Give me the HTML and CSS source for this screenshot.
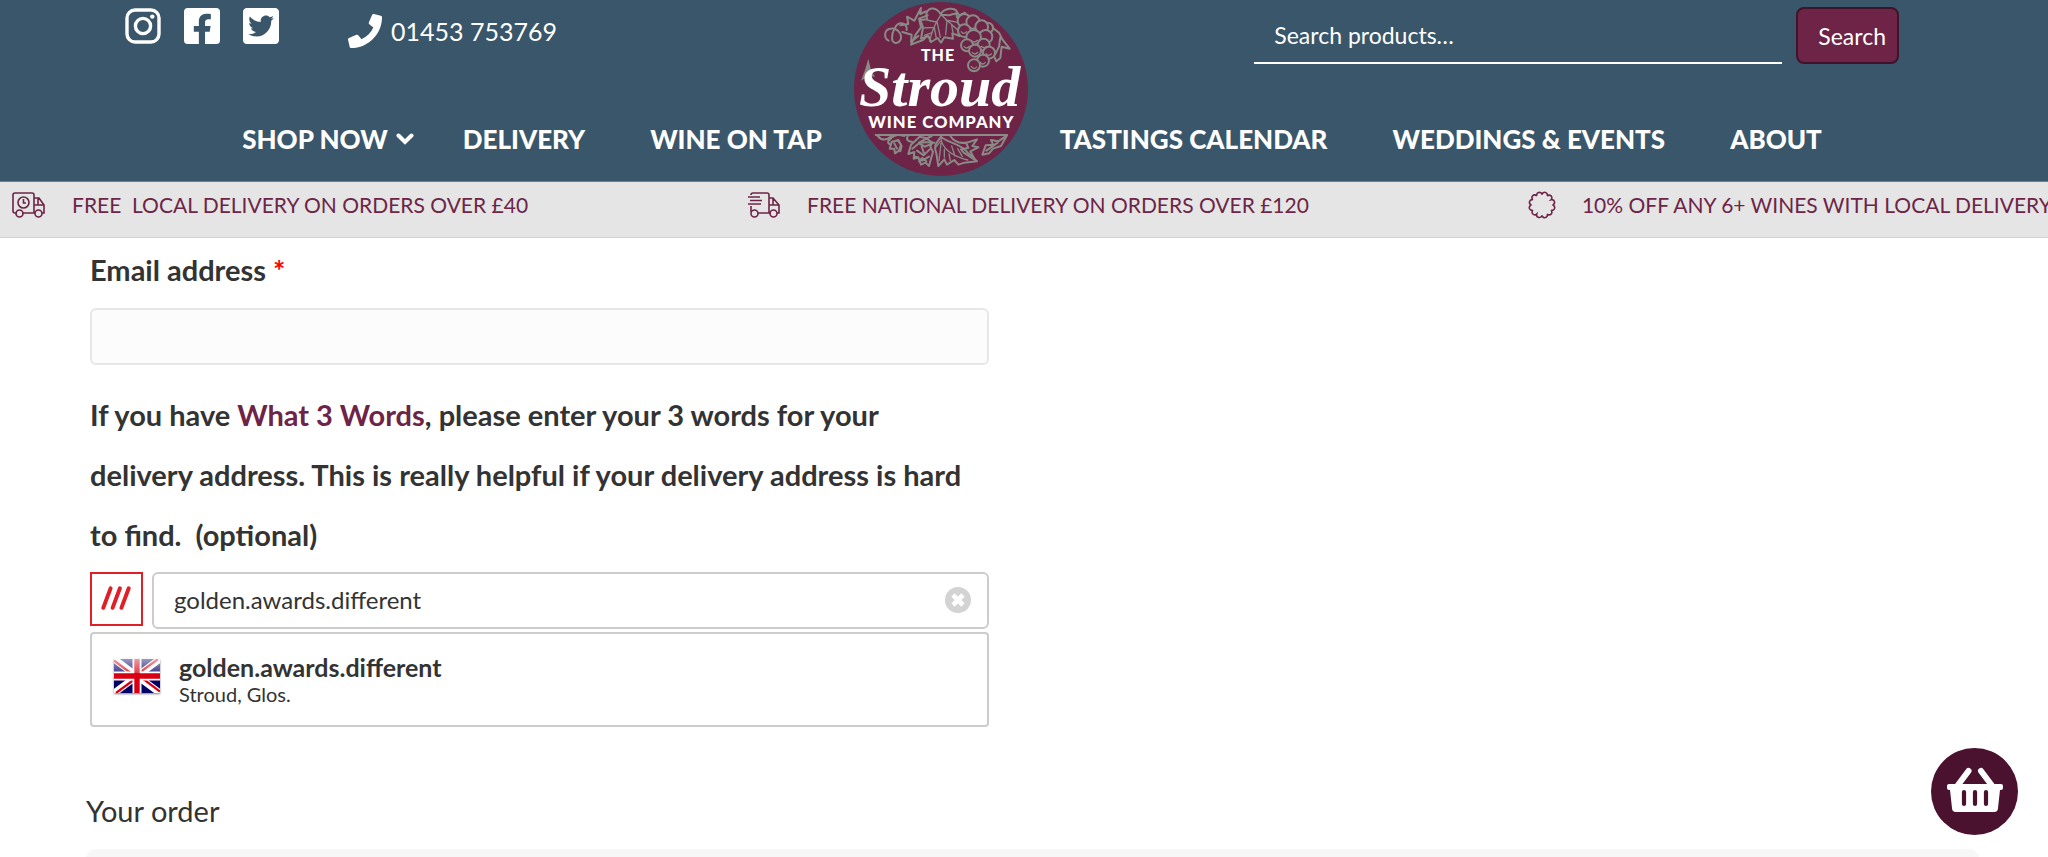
FILE: index.html
```html
<!DOCTYPE html>
<html lang="en">
<head>
  <meta charset="UTF-8">
  <meta name="viewport" content="width=device-width, initial-scale=1.0">
  <title>Checkout - The Stroud Wine Company</title>
  <link rel="stylesheet" href="styles.css">
</head>
<body>
  <header class="site-header">
    <div class="contact">
      <div class="social">
        <a href="#" aria-label="Instagram">
          <svg viewBox="0 0 36 36">
            <rect x="2" y="2" width="32" height="32" rx="8" fill="none" stroke="#fff" stroke-width="3.4"/>
            <circle cx="18" cy="18" r="7.6" fill="none" stroke="#fff" stroke-width="3.4"/>
            <circle cx="27.3" cy="8.6" r="2.2" fill="#fff"/>
          </svg>
        </a>
        <a href="#" aria-label="Facebook">
          <svg viewBox="0 0 448 448">
            <path fill="#fff" d="M400 0H48A48 48 0 0 0 0 48v352a48 48 0 0 0 48 48h137V296h-63v-72h63v-55c0-62 37-96 93-96 27 0 56 5 56 5v61h-31c-31 0-41 19-41 39v46h69l-11 72h-58v152h138a48 48 0 0 0 48-48V48a48 48 0 0 0-48-48z"/>
          </svg>
        </a>
        <a href="#" aria-label="Twitter">
          <svg viewBox="0 0 448 448">
            <path fill="#fff" d="M400 0H48C21.500 0 0 21.500 0 48v352c0 26.500 21.500 48 48 48h352c26.500 0 48-21.500 48-48V48c0-26.500-21.500-48-48-48zm-48.900 158.800c.2 2.800.2 5.700.2 8.500 0 86.700-66 186.600-186.600 186.600-37.200 0-71.700-10.800-100.700-29.400 5.300.6 10.400.8 15.800.8 30.700 0 58.900-10.400 81.400-28-28.800-.6-53-19.500-61.300-45.500 10.100 1.500 19.200 1.500 29.600-1.200-30-6.100-52.500-32.500-52.500-64.400v-.8c8.700 4.900 18.900 7.900 29.600 8.300a65.400 65.400 0 0 1-29.200-54.600c0-12.200 3.200-23.400 8.900-33.100 32.300 39.800 80.800 65.800 135.200 68.600-9.300-44.500 24-80.600 64-80.600 18.900 0 35.900 7.900 47.900 20.700 14.800-2.800 29-8.300 41.600-15.800-4.900 15.200-15.200 28-28.800 36.100 13.200-1.400 26-5.100 37.800-10.200-8.900 13.100-20.100 24.700-32.900 34z"/>
          </svg>
        </a>
      </div>
      <a class="phone" href="tel:01453753769">
        <svg viewBox="0 0 512 512">
          <path fill="#fff" d="M493.400 24.600l-104-24c-11.300-2.600-22.900 3.300-27.500 13.900l-48 112c-4.200 9.800-1.400 21.300 6.900 28l60.600 49.600c-36 76.700-98.900 140.500-177.200 177.200l-49.600-60.600c-6.800-8.300-18.200-11.100-28-6.900l-112 48C3.900 366.500-2 378.100.6 389.400l24 104C27.100 504.200 36.700 512 48 512c256.100 0 464-207.500 464-464 0-11.200-7.700-20.900-18.600-23.400z"/>
        </svg>
        01453 753769
      </a>
    </div>

    <form class="search" role="search">
      <label class="sr-only" for="searchInput">Search for</label>
      <input type="search" id="searchInput" placeholder="Search products…">
      <button type="submit">Search</button>
    </form>

    <a class="logo" href="#" aria-label="The Stroud Wine Company">
      <svg viewBox="101 6 522 522">
        <circle cx="362" cy="267" r="261" fill="#6d2446"/>
        <g fill="none" stroke="#8a8a86" stroke-width="6" stroke-linejoin="round" stroke-linecap="round">
          <!-- tendril -->
          <path d="M205 122c-16-8-14-34 6-36 22-2 38 20 28 36-8 12-24 8-24-8 0-22 14-44 26-44 14 0 20 10 18 20"/>
          <!-- small leaf, left -->
          <path d="M246 96l28 8-2 22 22-18M240 76l24-4-4-22 22 12 20-38-2 18 16-8M272 134l14-30 16-22-6-26 26-10M272 134l36-14 12-12"/>
          <!-- main vine leaf -->
          <path d="M362 44c-14-24-36-24-44-4l2 18-20 2 8 22-6 34 22-8 8 18 20-12 10 14 10-16 26 4-2-16 22 8-4-16 22-2-12-20 8-12-22-6-2-12-22 6z"/>
          <path d="M362 44c-16 24-28 48-34 80M348 66l-28-6M342 82l-34 2M336 98l-24 8M350 64l10 48M342 82l6 34M362 44l50 46M376 60l40 8M380 62l-4 42M394 76l4 22" stroke-width="4"/>
          <!-- leaf behind the grapes -->
          <path d="M362 40c14-18 40-16 46-8l8 14 18-8M518 84l18 14 10 20 22 28-24-6-4 34-12 10-8-18M540 112l-4 28-12 24"/>
        </g>
        <g fill="#6d2446" stroke="#8a8a86" stroke-width="6">
          <circle cx="432" cy="62" r="20"/>
          <circle cx="502" cy="84" r="16"/>
          <circle cx="458" cy="66" r="20"/>
          <circle cx="484" cy="80" r="19"/>
          <circle cx="432" cy="92" r="19"/>
          <circle cx="496" cy="110" r="20"/>
          <circle cx="460" cy="112" r="22"/>
          <circle cx="440" cy="136" r="18"/>
          <circle cx="490" cy="134" r="18"/>
          <circle cx="464" cy="152" r="18"/>
          <circle cx="506" cy="158" r="18"/>
          <circle cx="488" cy="182" r="18"/>
          <circle cx="461" cy="196" r="18"/>
        </g>
        <g fill="none" stroke="#8a8a86" stroke-width="4">
          <path d="M422 94q8 12 18 0M450 120q12 12 22 0M430 138q8 12 18 0M482 138q10 10 18 0M455 156q8 12 18 0M496 160q10 12 18 0M478 186q10 12 18 0M452 198q8 14 18 2"/>
        </g>
        <path fill="#8a8a86" d="M144 176l8 34 12 20-20-2-22 14 12-32z"/>
        <g fill="none" stroke="#8a8a86" stroke-width="6" stroke-linejoin="round" stroke-linecap="round">
          <path d="M166 405h394M172 408q14 16 30 8l12-8q-20 22-2 26"/>
          <!-- flower buds -->
          <path d="M214 426l-6 20 14 0 2 14 12-8 6-18-8-14zM232 420l12 18-4 16M222 430l8 16"/>
          <path d="M208 420q14-22 44-12M262 410q-8 12 14 16"/>
          <path d="M298 410l-26 24-8 28 18-6-2 20 14-4 8 22 14-6 10 10 6-22 6-20-8-16 6-12-20-14zM276 446l20-16 18 10 18-8M290 452l20 14 18-18M284 470l22 12 20-12M304 440l8 22M296 484l10-10 12 10" />
          <path d="M334 408q-20 10-38 20q24-2 46 0"/>
          <!-- bottom vine leaf -->
          <path d="M362 410c-14 20-24 26-14 50l6 38 18-20 8 16 22-14 12 14 18-6 38-4-28-26c-24-30-60-28-80-48z"/>
          <path d="M362 412c0 28 26 54 80 68M362 430l-6 52M372 448l0 24M386 462l4 20M394 438l10 30M412 446l14 24M360 424l-14 18" stroke-width="4"/>
          <path d="M390 408q18 28 56 18l24-8-14 20 18 4-24 12 14 26-34-22-8-10 22-4-6-14"/>
          <path d="M486 464l10-28 22-2-6-14 22 4 26-18-18 32-24 8-12 14zM498 452l34-24"/>
        </g>
        <text class="logo-sans" x="353" y="183" font-size="48">THE</text>
        <text class="logo-script" x="358" y="318" font-size="174">Stroud</text>
        <text class="logo-sans" x="363" y="383" font-size="50">WINE COMPANY</text>
      </svg>
    </a>

    <nav class="nav nav-left">
      <a href="#">SHOP NOW
        <svg class="chevron" viewBox="0 0 18 12"><path d="M2.500 2.500L9 9l6.500-6.500" fill="none" stroke="#fff" stroke-width="4" stroke-linecap="round"/></svg>
      </a>
      <a href="#">DELIVERY</a>
      <a href="#">WINE ON TAP</a>
    </nav>
    <nav class="nav nav-right">
      <a href="#">TASTINGS CALENDAR</a>
      <a href="#">WEDDINGS &amp; EVENTS</a>
      <a href="#">ABOUT</a>
    </nav>
  </header>

  <ul class="usp-bar">
    <li>
      <svg viewBox="0 0 34 26">
        <path d="M5 21H3a2 2 0 0 1-2-2V3a2 2 0 0 1 2-2h17a2 2 0 0 1 2 2v18M10 21h13M22 6h5l5 7v8h-2M22 13h10M26 6v7"/>
        <circle cx="7.500" cy="21.500" r="3.500"/><circle cx="26.500" cy="21.500" r="3.500"/>
        <circle cx="11.500" cy="10.500" r="5.500"/><path d="M11.500 7v4h2.500"/>
      </svg>
      FREE&nbsp; LOCAL DELIVERY ON ORDERS OVER £40
    </li>
    <li>
      <svg viewBox="0 0 34 26">
        <path d="M4 3q0-2 2-2h14a2 2 0 0 1 2 2v18M11 21h13M22 6h4l6 7v8h-2M22 13h10M26 6v7M4 14v6M1 5h12M3 8.500h12M1 12h13"/>
        <circle cx="7.500" cy="21.500" r="3.500"/><circle cx="26.500" cy="21.500" r="3.500"/>
      </svg>
      FREE NATIONAL DELIVERY ON ORDERS OVER £120
    </li>
    <li>
      <svg class="badge" viewBox="0 0 28 28">
        <path d="M14 3.500A2.700 2.700 0 1 1 19.200 4.900A2.700 2.700 0 1 1 23.100 8.700A2.700 2.700 0 1 1 24.500 14A2.700 2.700 0 1 1 23.100 19.200A2.700 2.700 0 1 1 19.200 23.100A2.700 2.700 0 1 1 14 24.500A2.700 2.700 0 1 1 8.700 23.100A2.700 2.700 0 1 1 4.900 19.200A2.700 2.700 0 1 1 3.500 14A2.700 2.700 0 1 1 4.900 8.700A2.700 2.700 0 1 1 8.700 4.900A2.700 2.700 0 1 1 14 3.500z"/>
      </svg>
      10% OFF ANY 6+ WINES WITH LOCAL DELIVERY
    </li>
  </ul>

  <main class="checkout">
    <form class="fields">
      <label class="field-label" for="email">Email address <abbr title="required">*</abbr></label>
      <input class="email" type="email" id="email">

      <label class="field-label" for="w3w">If you have <a href="#">What 3 Words</a>, please enter your 3 words for your delivery address. This is really helpful if your delivery address is hard to find.&nbsp; (optional)</label>
      <div class="w3w">
        <svg class="w3w-logo" viewBox="0 0 50 50">
          <path d="M11.500 34l7.500-20M21 34l7.500-20M30 34l7.500-20"/>
        </svg>
        <div class="w3w-box">
          <input type="text" id="w3w" value="golden.awards.different">
          <button type="button" class="clear" aria-label="Clear">
            <svg viewBox="0 0 26 26"><circle cx="13" cy="13" r="13" fill="#d3d3d3"/><path d="M8 8l10 10M18 8L8 18" stroke="#fff" stroke-width="4.600"/></svg>
          </button>
        </div>
      </div>
      <ul class="suggestions">
        <li>
          <svg class="flag" viewBox="0 0 46 34">
            <defs>
              <linearGradient id="shine" x1="0" y1="0" x2="0" y2="1">
                <stop offset="0" stop-color="#fff" stop-opacity=".6"/>
                <stop offset="1" stop-color="#fff" stop-opacity=".25"/>
              </linearGradient>
            </defs>
            <rect width="46" height="34" fill="#006"/>
            <path d="M0 0l46 34M46 0L0 34" stroke="#fff" stroke-width="7"/>
            <path d="M0 1.500l20 15M46 32.500l-20-15M44 0L25 14M2 34l19-14" stroke="#d80012" stroke-width="2.200"/>
            <path d="M23 0v34M0 17h46" stroke="#fff" stroke-width="9"/>
            <path d="M23 0v34M0 17h46" stroke="#d80012" stroke-width="5.400"/>
            <rect width="46" height="14" fill="url(#shine)"/>
          </svg>
          <div>
            <strong>golden.awards.different</strong>
            <span>Stroud, Glos.</span>
          </div>
        </li>
      </ul>
    </form>

    <section class="order">
      <h3>Your order</h3>
      <div class="order-review"></div>
    </section>
  </main>

  <button type="button" class="basket" aria-label="Basket">
    <svg viewBox="0 0 58 46">
      <path d="M22.500 4L12 18M35 4l10.500 14" fill="none" stroke="#fff" stroke-width="6" stroke-linecap="round"/>
      <path d="M3 17h52a2 2 0 0 1 2 2v2a2 2 0 0 1-2 2h-1l-2 18a4 4 0 0 1-4 4H10a4 4 0 0 1-4-4L4 23H3a2 2 0 0 1-2-2v-2a2 2 0 0 1 2-2z" fill="#fff"/>
      <path d="M18 25v12M29 25v12M40 25v12" stroke="#4a122e" stroke-width="4.200" stroke-linecap="round"/>
    </svg>
  </button>
</body>
</html>
```
FILE: styles.css
```css
* {
  box-sizing: border-box;
}
html, body {
  margin: 0;
  padding: 0;
}
body {
  font-family: Lato, sans-serif;
  color: #333;
  background: #fff;
  height: 100vh;
  overflow: hidden;
}
a {
  color: inherit;
  text-decoration: none;
}
ul {
  list-style: none;
  margin: 0;
  padding: 0;
}
svg {
  display: block;
  flex: none;
}
button {
  cursor: pointer;
}
.sr-only {
  position: absolute;
  width: 1px;
  height: 1px;
  overflow: hidden;
  clip: rect(0, 0, 0, 0);
}

/* header */
.site-header {
  display: grid;
  grid-template-columns: 46fr 174px 55fr;
  grid-template-areas:
    "contact logo search"
    "navleft logo navright";
  padding: 2px 149px 5px 125px;
  background: #39566a;
  border-bottom: 1px solid #6a8090;
  color: #fff;
}
.contact {
  grid-area: contact;
  display: flex;
  gap: 69px;
  padding-top: 6px;
}
.social {
  display: flex;
  gap: 23px;
}
.social svg {
  width: 36px;
  height: 36px;
}
.phone {
  display: flex;
  align-items: center;
  align-self: flex-start;
  gap: 9px;
  font-size: 25px;
  line-height: 46px;
}
.phone svg {
  width: 34px;
  height: 34px;
}
.search {
  grid-area: search;
  display: flex;
  justify-content: flex-end;
  align-items: flex-start;
  gap: 14px;
  padding-top: 5px;
}
.search input {
  flex: 0 1 528px;
  min-width: 0;
  height: 57px;
  padding: 0 20px;
  border: none;
  border-bottom: 2px solid #fff;
  background: transparent;
  color: #fff;
  font-family: inherit;
  font-size: 23px;
  outline: none;
}
.search input::placeholder {
  color: #fff;
}
.search button {
  height: 57px;
  padding: 0 11px 0 20px;
  border: 2px solid #3f1329;
  border-radius: 8px;
  background: #6d2446;
  color: #fff;
  font-family: inherit;
  font-size: 23px;
}
.logo {
  grid-area: logo;
}
.logo svg {
  width: 174px;
  height: 174px;
}
.logo text {
  fill: #fff;
  text-anchor: middle;
}
.logo-sans {
  font-family: Lato, sans-serif;
  font-weight: 900;
  letter-spacing: 3px;
}
.logo-script {
  font-family: "Liberation Serif", serif;
  font-weight: bold;
  font-style: italic;
}
.nav {
  display: flex;
  align-self: end;
  gap: 65px;
  padding: 0 32px 17px;
  font-size: 26px;
  font-weight: 900;
  line-height: 40px;
  white-space: nowrap;
}
.nav a {
  display: flex;
  align-items: center;
}
.nav-left {
  grid-area: navleft;
  justify-content: flex-end;
}
.nav-left a:first-child {
  margin-right: -16px;
}
.nav-right {
  grid-area: navright;
}
.chevron {
  width: 18px;
  height: 12px;
  margin-left: 8px;
}

/* scrolling offers */
.usp-bar {
  display: flex;
  align-items: flex-start;
  gap: 219px;
  height: 56px;
  padding: 8px 0 0 12px;
  overflow: hidden;
  background: #e5e5e5;
  border-bottom: 1px solid #d3d3d3;
  color: #6d2446;
  font-size: 21px;
  line-height: 30px;
  white-space: nowrap;
}
.usp-bar li {
  display: flex;
  flex: none;
  align-items: center;
  gap: 26px;
}
.usp-bar svg {
  width: 34px;
  height: 26px;
  fill: none;
  stroke: #6d2446;
  stroke-width: 1.6;
}
.usp-bar .badge {
  width: 28px;
  height: 28px;
}

/* checkout form */
.checkout {
  padding: 2px 69px 0 86px;
}
.fields {
  max-width: 903px;
  padding-left: 4px;
}
.field-label {
  display: block;
  padding-right: 24px;
  font-size: 29px;
  font-weight: 700;
  line-height: 60px;
}
.field-label abbr {
  color: #f00;
  text-decoration: none;
}
.field-label a {
  color: #6d2446;
}
.email {
  display: block;
  width: 100%;
  height: 57px;
  margin: 8px 0 20px;
  padding: 0 20px;
  border: 2px solid #e7e7e7;
  border-radius: 6px;
  background: #fcfcfc;
  font-family: inherit;
  font-size: 24px;
}
.w3w {
  display: flex;
  gap: 9px;
  margin-top: 7px;
}
.w3w-logo {
  width: 53px;
  height: 54px;
  border: 2px solid #e11f26;
  fill: none;
  stroke: #e11f26;
  stroke-width: 4;
  stroke-linecap: round;
}
.w3w-box {
  display: flex;
  flex: 1;
  align-items: center;
  height: 57px;
  padding: 0 16px 2px 20px;
  border: 2px solid #ccc;
  border-radius: 6px;
}
.w3w-box input {
  flex: 1;
  min-width: 0;
  padding: 0;
  border: none;
  background: transparent;
  color: #333;
  font-family: inherit;
  font-size: 24px;
  outline: none;
}
.clear {
  padding: 0;
  border: none;
  background: none;
}
.clear svg {
  width: 26px;
  height: 26px;
}
.suggestions {
  margin-top: 3px;
  border: 2px solid #ccc;
  border-radius: 4px;
}
.suggestions li {
  display: flex;
  gap: 19px;
  padding: 18px 22px 19px;
}
.flag {
  width: 46px;
  height: 34px;
  margin-top: 7px;
  box-shadow: 0 1px 2px rgba(0, 0, 0, 0.5);
}
.suggestions strong,
.suggestions span {
  display: block;
}
.suggestions strong {
  font-size: 25px;
  line-height: 30px;
}
.suggestions span {
  font-size: 20px;
  line-height: 24px;
}

/* order */
.order h3 {
  margin: 64px 0 18px;
  font-size: 29px;
  font-weight: 400;
  line-height: 40px;
}
.order-review {
  height: 60px;
  border-radius: 10px;
  background: #f7f7f7;
}

.basket {
  position: fixed;
  right: 30px;
  bottom: 22px;
  display: flex;
  justify-content: center;
  align-items: center;
  width: 87px;
  height: 87px;
  padding: 0 0 4px;
  border: none;
  border-radius: 50%;
  background: #4a122e;
}
.basket svg {
  width: 58px;
  height: 46px;
}
```
